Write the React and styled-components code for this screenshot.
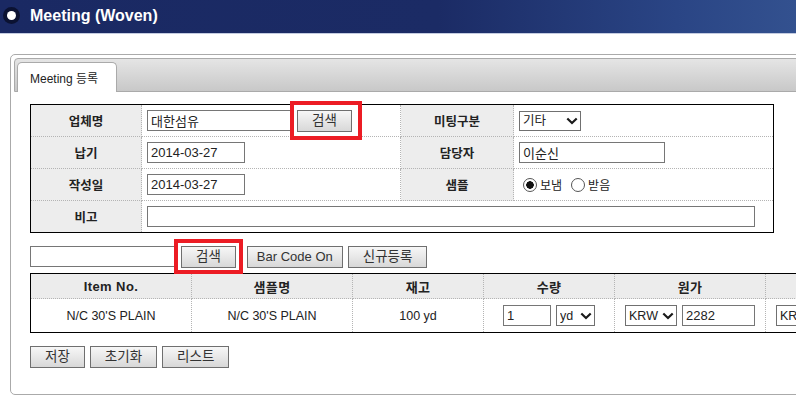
import React from "react";
import styled, { createGlobalStyle } from "styled-components";

const GlobalStyle = createGlobalStyle`
  html, body { margin: 0; padding: 0; background: #fff; overflow: hidden; }
  body {
    font-family: "Liberation Sans", "Noto Sans CJK KR", sans-serif;
    font-size: 12px;
    color: #222;
  }
  * { box-sizing: border-box; }
`;

const Header = styled.header`
  height: 34px;
  border-bottom: 1px solid #c3cbe0;
  background: linear-gradient(90deg, #1a2963 0%, #1b2b65 55%, #2a4585 85%, #33518f 100%);
  display: flex;
  align-items: center;
  padding: 0 0 2px 3px;
  gap: 10px;
`;

const Bullet = styled.span`
  width: 17px;
  height: 17px;
  border-radius: 50%;
  background: #0b1232;
  display: flex;
  align-items: center;
  justify-content: center;
  &::after {
    content: "";
    width: 9px;
    height: 9px;
    border-radius: 50%;
    background: #fff;
  }
`;

const Title = styled.h1`
  margin: 0;
  color: #fff;
  font-family: "Liberation Sans", sans-serif;
  font-weight: bold;
  font-size: 16px;
`;

const Main = styled.main`
  padding: 20px 0 0 10px;
`;

const Panel = styled.section`
  width: 1000px;
  border: 1px solid #aaa;
  border-radius: 5px;
  padding: 3px 3px 26px 3px;
`;

const TabBar = styled.div`
  height: 34px;
  border: 1px solid #aaa;
  border-radius: 4px 4px 0 0;
  background: linear-gradient(#e5e5e5, #c8c8c8);
  display: flex;
  align-items: flex-end;
  padding-left: 2px;
`;

const Tab = styled.div`
  height: 30px;
  width: 100px;
  margin-bottom: -1px;
  background: #fff;
  border: 1px solid #aaa;
  border-bottom: none;
  border-radius: 5px 5px 0 0;
  padding-left: 12px;
  display: flex;
  align-items: center;
  font-size: 12px;
  color: #222;
`;

const Content = styled.div`
  padding: 12px 0 0 16px;
`;

const FormTable = styled.table`
  border-collapse: collapse;
  border: 1px solid #000;
  table-layout: fixed;
  width: 743px;
`;

const Row = styled.tr`
  height: ${(p) => p.$h || 32}px;
`;

const Label = styled.td`
  background: #ededed;
  font-weight: bold;
  font-size: 12.5px;
  text-align: center;
  color: #222;
  border: 1px dotted #b4b4b4;
`;

const Value = styled.td`
  padding: 0 5px;
  border: 1px dotted #b4b4b4;
`;

const Inline = styled.div`
  display: flex;
  align-items: center;
  justify-content: ${(p) => (p.$center ? "center" : "flex-start")};
  gap: ${(p) => p.$gap ?? 5}px;
  padding-left: ${(p) => p.$pl || 0}px;
`;

const TextInput = styled.input`
  width: ${(p) => p.$w}px;
  height: 21px;
  border: 1px solid #767676;
  padding: 0 3px;
  font-family: "Liberation Sans", "Noto Sans CJK KR", sans-serif;
  font-size: 13px;
  color: #222;
  background: #fff;
  outline: none;
`;

const Button = styled.button`
  height: 22px;
  padding: 0 ${(p) => (p.$compact ? 9 : 14)}px;
  border: 1px solid #6f6f6f;
  border-radius: 0;
  background: linear-gradient(#f7f7f7, #d8d8d8);
  color: #333;
  font-family: "Liberation Sans", "Noto Sans CJK KR", sans-serif;
  font-size: ${(p) => (p.$compact ? 13 : 13.5)}px;
  line-height: 20px;
  white-space: nowrap;
  cursor: pointer;
`;

const Highlight = styled.span`
  position: relative;
  display: inline-flex;
  margin-right: ${(p) => p.$mr || 0}px;
  &::after {
    content: "";
    position: absolute;
    top: -${(p) => p.$t}px;
    bottom: -${(p) => p.$b}px;
    left: -${(p) => p.$l}px;
    right: -${(p) => p.$r}px;
    border: 4px solid #ec1c24;
    pointer-events: none;
  }
`;

const SelectWrap = styled.span`
  position: relative;
  display: inline-flex;
  width: ${(p) => p.$w}px;
  height: ${(p) => p.$h || 21}px;
  svg {
    position: absolute;
    right: 3px;
    top: 50%;
    transform: translateY(-50%);
    pointer-events: none;
  }
`;

const NativeSelect = styled.select`
  appearance: none;
  -webkit-appearance: none;
  width: 100%;
  height: 100%;
  border: 1px solid #707070;
  border-radius: 0;
  background: #fff;
  padding: 0 15px 0 3px;
  font-family: "Liberation Sans", "Noto Sans CJK KR", sans-serif;
  font-size: 12.5px;
  color: #222;
  outline: none;
`;

const Chevron = () => (
  <svg width="12" height="8" viewBox="0 0 12 8">
    <path d="M1.3 1.5 L6 6 L10.7 1.5" stroke="#1a1a1a" strokeWidth="2.2" fill="none" />
  </svg>
);

const Select = ({ w, h, options }) => (
  <SelectWrap $w={w} $h={h}>
    <NativeSelect defaultValue={options[0]}>
      {options.map((o) => (
        <option key={o}>{o}</option>
      ))}
    </NativeSelect>
    <Chevron />
  </SelectWrap>
);

const RadioLabel = styled.label`
  display: inline-flex;
  align-items: center;
  gap: 3px;
  margin-left: ${(p) => p.$ml || 0}px;
  font-size: 12px;
  color: #222;
`;

const Radio = styled.input.attrs({ type: "radio" })`
  appearance: none;
  -webkit-appearance: none;
  width: 14px;
  height: 14px;
  margin: 0;
  border: 1px solid #555;
  border-radius: 50%;
  background: #fff;
  &:checked {
    background: radial-gradient(circle, #111 0 3.5px, #fff 4px);
  }
`;

const ActionRow = styled.div`
  display: flex;
  align-items: center;
  height: 23px;
  margin-top: 12px;
  gap: 5px;
`;

const ItemTable = styled.table`
  margin-top: 5px;
  border-collapse: collapse;
  border-top: 1px solid #000;
  border-bottom: 1px solid #000;
  border-left: 1px solid #000;
  table-layout: fixed;
  width: 900px;
`;

const Th = styled.th`
  background: #ececec;
  font-weight: bold;
  font-size: 13px;
  letter-spacing: 0.4px;
  text-align: center;
  color: #222;
  border: 1px dotted #b4b4b4;
  padding: 0;
`;

const Td = styled.td`
  text-align: center;
  font-size: 12.5px;
  color: #222;
  border: 1px dotted #b4b4b4;
  padding: 0;
`;

const ButtonRow = styled.div`
  display: flex;
  gap: 5px;
  margin-top: 13px;
`;

export default function App() {
  return (
    <>
      <GlobalStyle />
      <Header>
        <Bullet />
        <Title>Meeting (Woven)</Title>
      </Header>
      <Main>
        <Panel>
          <TabBar>
            <Tab>Meeting 등록</Tab>
          </TabBar>
          <Content>
            <FormTable>
              <colgroup>
                <col style={{ width: 111 }} />
                <col style={{ width: 259 }} />
                <col style={{ width: 113 }} />
                <col style={{ width: 260 }} />
              </colgroup>
              <tbody>
                <Row>
                  <Label>업체명</Label>
                  <Value>
                    <Inline $gap={6}>
                      <TextInput $w={144} defaultValue="대한섬유" />
                      <Highlight $t={9} $b={8} $l={7} $r={10}>
                        <Button>검색</Button>
                      </Highlight>
                    </Inline>
                  </Value>
                  <Label>미팅구분</Label>
                  <Value>
                    <Select w={62} h={20} options={["기타"]} />
                  </Value>
                </Row>
                <Row>
                  <Label>납기</Label>
                  <Value>
                    <TextInput $w={98} defaultValue="2014-03-27" />
                  </Value>
                  <Label>담당자</Label>
                  <Value>
                    <TextInput $w={146} defaultValue="이순신" />
                  </Value>
                </Row>
                <Row>
                  <Label>작성일</Label>
                  <Value>
                    <TextInput $w={98} defaultValue="2014-03-27" />
                  </Value>
                  <Label>샘플</Label>
                  <Value>
                    <Inline $gap={0}>
                      <RadioLabel $ml={4}>
                        <Radio name="sample" defaultChecked />
                        보냄
                      </RadioLabel>
                      <RadioLabel $ml={9}>
                        <Radio name="sample" />
                        받음
                      </RadioLabel>
                    </Inline>
                  </Value>
                </Row>
                <Row>
                  <Label>비고</Label>
                  <Value colSpan={3}>
                    <TextInput $w={608} />
                  </Value>
                </Row>
              </tbody>
            </FormTable>

            <ActionRow>
              <TextInput $w={146} />
              <Highlight $t={7} $b={6} $l={7} $r={7} $mr={6}>
                <Button>검색</Button>
              </Highlight>
              <Button $compact>Bar Code On</Button>
              <Button>신규등록</Button>
            </ActionRow>

            <ItemTable>
              <colgroup>
                <col style={{ width: 161 }} />
                <col style={{ width: 161 }} />
                <col style={{ width: 131 }} />
                <col style={{ width: 131 }} />
                <col style={{ width: 151 }} />
                <col style={{ width: 165 }} />
              </colgroup>
              <thead>
                <Row $h={25}>
                  <Th>Item No.</Th>
                  <Th>샘플명</Th>
                  <Th>재고</Th>
                  <Th>수량</Th>
                  <Th>원가</Th>
                  <Th />
                </Row>
              </thead>
              <tbody>
                <Row $h={34}>
                  <Td>N/C 30'S PLAIN</Td>
                  <Td>N/C 30'S PLAIN</Td>
                  <Td>100 yd</Td>
                  <Td>
                    <Inline $center $gap={5}>
                      <TextInput $w={48} defaultValue="1" />
                      <Select w={39} options={["yd"]} />
                    </Inline>
                  </Td>
                  <Td>
                    <Inline $center $gap={5}>
                      <Select w={52} options={["KRW"]} />
                      <TextInput $w={73} defaultValue="2282" />
                    </Inline>
                  </Td>
                  <Td>
                    <Inline $gap={5} $pl={10}>
                      <Select w={52} options={["KRW"]} />
                      <TextInput $w={73} defaultValue="" />
                    </Inline>
                  </Td>
                </Row>
              </tbody>
            </ItemTable>

            <ButtonRow>
              <Button>저장</Button>
              <Button>초기화</Button>
              <Button>리스트</Button>
            </ButtonRow>
          </Content>
        </Panel>
      </Main>
    </>
  );
}
